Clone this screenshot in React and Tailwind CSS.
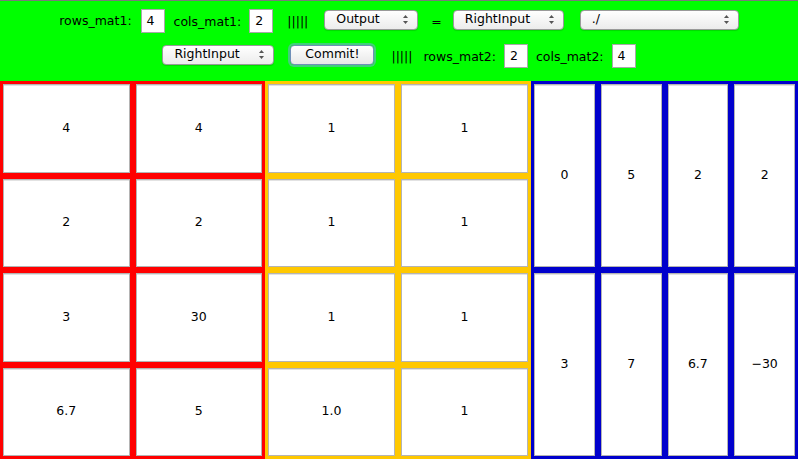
const font = { fontFamily: '"DejaVu Sans", "Liberation Sans", sans-serif' };

const Arrows = () => (
  <svg width="7" height="11" viewBox="0 0 7 11" className="shrink-0">
    <path d="M3.5 1 L6 4 L1 4 Z" fill="#555" />
    <path d="M3.5 10 L6 7 L1 7 Z" fill="#555" />
  </svg>
);

const Select = ({ label, w }) => (
  <div
    className={`flex items-center justify-between h-[20px] pl-[11px] pr-[8px] rounded-[4px] border border-[#9a9a9a] bg-gradient-to-b from-white to-[#ececec] shadow-[0_1px_1px_rgba(0,0,0,0.15)] ${w}`}
  >
    <span className="text-[12.5px] leading-none text-black">{label}</span>
    <Arrows />
  </div>
);

const NumBox = ({ value }) => (
  <div className="w-[24px] h-[24px] bg-white border border-[#a9a9a9] flex items-center pl-[5px] text-[12.5px] text-black">
    {value}
  </div>
);

const Label = ({ children }) => (
  <span className="text-[12.5px] text-black leading-none whitespace-nowrap">{children}</span>
);

const Cell = ({ v }) => (
  <div className="bg-white border border-[#b4b4b4] shadow-[inset_0_1px_0_#e2e2e2] flex items-center justify-center text-[12.5px] text-black">
    {v}
  </div>
);

const Panel = ({ color, cols, rows, data }) => (
  <div className={`${color} p-[3px] grid ${cols} ${rows} gap-[6px] h-full`}>
    {data.map((v, i) => (
      <Cell key={i} v={v} />
    ))}
  </div>
);

export default function App() {
  return (
    <div className="w-[798px] h-[459px] flex flex-col overflow-hidden" style={font}>
      {/* toolbar */}
      <div className="h-[81px] bg-[#00ff00] border-t border-[#7a7a7a] flex flex-col items-center pt-[8px]">
        <div className="flex items-center h-[24px]">
          <Label>rows_mat1:</Label>
          <div className="ml-[9px]"><NumBox value="4" /></div>
          <div className="ml-[9px]"><Label>cols_mat1:</Label></div>
          <div className="ml-[8px]"><NumBox value="2" /></div>
          <div className="ml-[14px]"><Label>|||||</Label></div>
          <div className="ml-[16px] -mt-[3px]"><Select label="Output" w="w-[94px]" /></div>
          <div className="ml-[13px]"><Label>=</Label></div>
          <div className="ml-[11px] -mt-[3px]"><Select label="RightInput" w="w-[111px]" /></div>
          <div className="ml-[16px] -mt-[3px]"><Select label="./" w="w-[159px]" /></div>
        </div>
        <div className="flex items-center h-[24px] mt-[11px]">
          <div className="-mt-[3px]"><Select label="RightInput" w="w-[112px]" /></div>
          <div className="ml-[16px] -mt-[3px]">
            <div className="w-[84px] h-[20px] rounded-[4px] border border-[#6f8fb8] bg-gradient-to-b from-white to-[#e8e8e8] shadow-[0_0_0_2px_rgba(120,165,225,0.55)] flex items-center justify-center text-[12.5px] text-black leading-none">
              Commit!
            </div>
          </div>
          <div className="ml-[17px]"><Label>|||||</Label></div>
          <div className="ml-[11px]"><Label>rows_mat2:</Label></div>
          <div className="ml-[8px]"><NumBox value="2" /></div>
          <div className="ml-[8px]"><Label>cols_mat2:</Label></div>
          <div className="ml-[8px]"><NumBox value="4" /></div>
        </div>
      </div>

      {/* matrices */}
      <div className="flex-1 grid grid-cols-[265px_266px_267px]">
        <Panel
          color="bg-[#ff0000]"
          cols="grid-cols-2"
          rows="grid-rows-4"
          data={['4', '4', '2', '2', '3', '30', '6.7', '5']}
        />
        <Panel
          color="bg-[#ffc800]"
          cols="grid-cols-2"
          rows="grid-rows-4"
          data={['1', '1', '1', '1', '1', '1', '1.0', '1']}
        />
        <Panel
          color="bg-[#0000cc]"
          cols="grid-cols-4"
          rows="grid-rows-2"
          data={['0', '5', '2', '2', '3', '7', '6.7', '−30']}
        />
      </div>
    </div>
  );
}
